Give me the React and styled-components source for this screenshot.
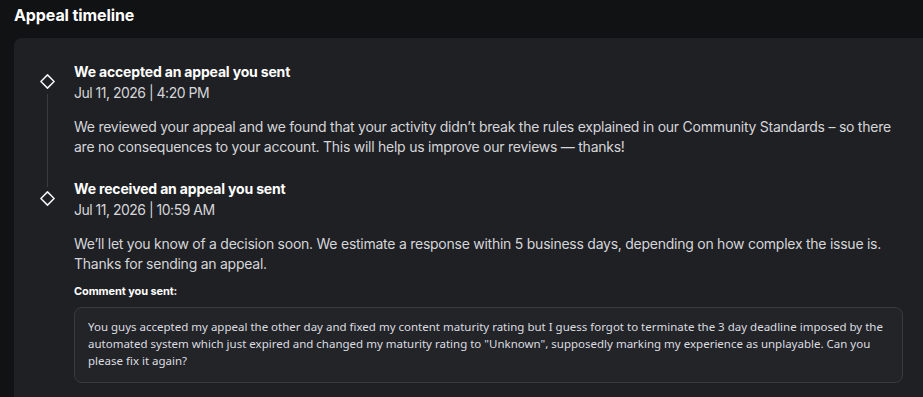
import styled, { createGlobalStyle } from 'styled-components'

const GlobalStyle = createGlobalStyle`
  html, body {
    margin: 0;
    padding: 0;
    background-color: #111214;
    color: #f7f7f8;
    font-family: Inter, "Noto Sans", sans-serif;
    overflow: hidden;
  }
`

const PageStyled = styled('section')`
  padding: 4px 0 0 14px;
`

const HeadingStyled = styled('h1')`
  margin: 0 0 12px;
  font-size: 16px;
  line-height: 22px;
  font-weight: 700;
  letter-spacing: -0.1px;
  color: #ffffff;
`

const CardStyled = styled('div')`
  background-color: #1f2024;
  border-radius: 8px 0 0 0;
  padding: 24px 20px 30px 26px;
  min-height: 400px;
`

const EventStyled = styled('article')`
  display: grid;
  grid-template-columns: 14px 1fr;
  column-gap: 20px;
`

const RailStyled = styled('div')`
  display: flex;
  flex-direction: column;
  align-items: center;
  padding-top: 12px;

  & svg {
    display: block;
  }

  & span {
    width: 1px;
    flex: 1;
    margin: 5px 0 -8px;
    background-color: ${({ $last }) => ($last ? 'transparent' : '#3a3b40')};
  }
`

const Diamond = () => (
  <svg width="15" height="15" viewBox="0 0 15 15">
    <path d="M7.5 0.9 L14.1 7.5 L7.5 14.1 L0.9 7.5 Z" fill="none" stroke="#f4f4f5" strokeWidth="1.5" strokeLinejoin="round" />
  </svg>
)

const BodyStyled = styled('div')`
  padding-bottom: ${({ $last }) => ($last ? '0' : '22px')};

  & h3 {
    margin: 0;
    font-size: 14px;
    line-height: 20px;
    font-weight: 700;
    letter-spacing: -0.17px;
    color: #ffffff;
  }

  & time {
    display: block;
    margin-top: 1px;
    font-size: 14px;
    line-height: 20px;
    letter-spacing: -0.5px;
    color: #d5d6d9;
  }

  & p {
    margin: 14px 0 0;
    font-size: 14px;
    line-height: 20px;
    letter-spacing: -0.25px;
    color: #d5d6d9;
  }
`

const CommentLabelStyled = styled('strong')`
  display: block;
  margin-top: 9px;
  font-size: 11px;
  line-height: 16px;
  font-weight: 700;
  letter-spacing: -0.1px;
  color: #ffffff;
`

const CommentBoxStyled = styled('div')`
  margin-top: 8px;
  background-color: #232428;
  border: 1px solid #393b3f;
  border-radius: 8px;
  padding: 10px 13px 13px;
  font-family: "Noto Sans", sans-serif;
  font-size: 11.5px;
  line-height: 17px;
  color: #dcdde0;
`

const events = [
  {
    title: 'We accepted an appeal you sent',
    date: 'Jul 11, 2026 | 4:20 PM',
    text: 'We reviewed your appeal and we found that your activity didn’t break the rules explained in our Community Standards – so there are no consequences to your account. This will help us improve our reviews — thanks!'
  },
  {
    title: 'We received an appeal you sent',
    date: 'Jul 11, 2026 | 10:59 AM',
    text: 'We’ll let you know of a decision soon. We estimate a response within 5 business days, depending on how complex the issue is. Thanks for sending an appeal.',
    comment: 'You guys accepted my appeal the other day and fixed my content maturity rating but I guess forgot to terminate the 3 day deadline imposed by the automated system which just expired and changed my maturity rating to "Unknown", supposedly marking my experience as unplayable. Can you please fix it again?'
  }
]

export default function App() {
  return (
    <PageStyled>
      <GlobalStyle />
      <HeadingStyled>Appeal timeline</HeadingStyled>
      <CardStyled>
        {events.map((event, i) => {
          const last = i === events.length - 1
          return (
            <EventStyled key={event.title}>
              <RailStyled $last={last}>
                <Diamond />
                <span />
              </RailStyled>
              <BodyStyled $last={last}>
                <h3>{event.title}</h3>
                <time>{event.date}</time>
                <p>{event.text}</p>
                {event.comment && (
                  <>
                    <CommentLabelStyled>Comment you sent:</CommentLabelStyled>
                    <CommentBoxStyled>{event.comment}</CommentBoxStyled>
                  </>
                )}
              </BodyStyled>
            </EventStyled>
          )
        })}
      </CardStyled>
    </PageStyled>
  )
}
